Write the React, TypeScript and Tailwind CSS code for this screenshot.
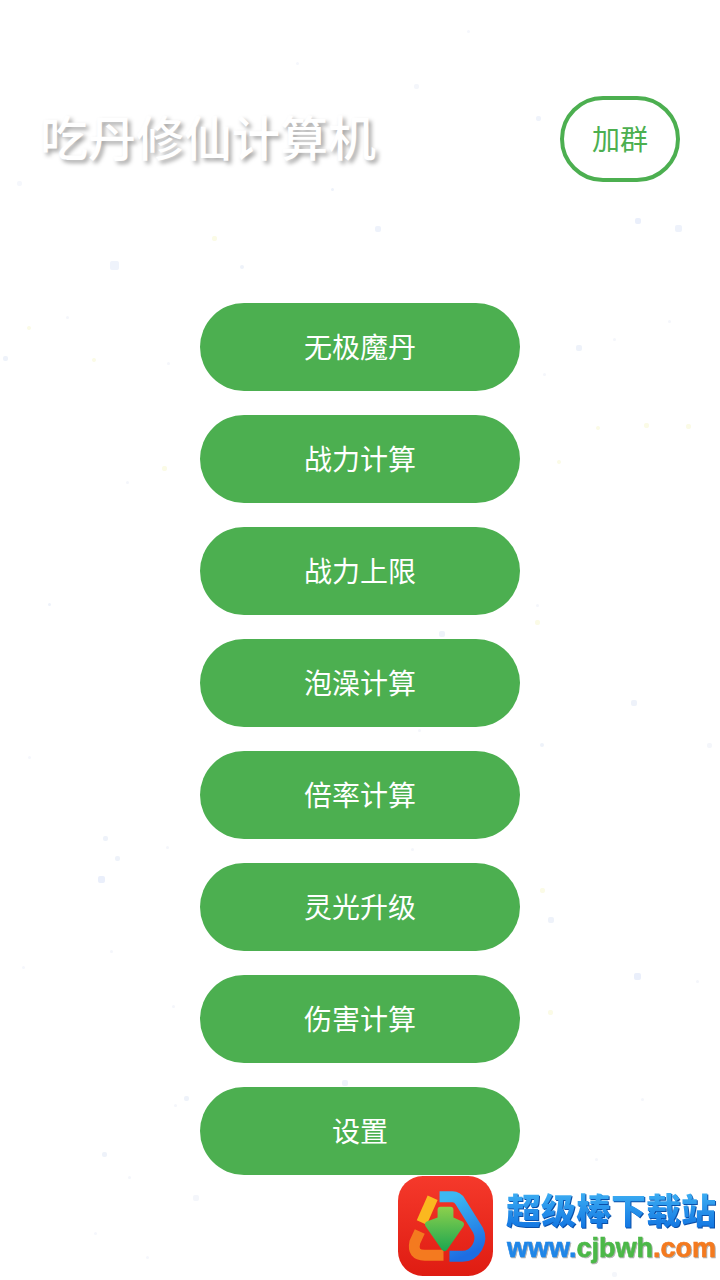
const menu = ["无极魔丹", "战力计算", "战力上限", "泡澡计算", "倍率计算", "灵光升级", "伤害计算", "设置"];

// faint confetti specks in the page background
const specks: [number, number, number, string][] = [
  [110, 261, 9, "#eff3fb"], [240, 265, 4, "#eef2fa"], [375, 226, 6, "#eef2fb"], [635, 218, 6, "#eaeffb"],
  [675, 225, 7, "#eef2fb"], [212, 236, 5, "#fbfbe6"], [536, 116, 5, "#eff3fb"], [17, 181, 5, "#f5f7fc"],
  [331, 188, 3, "#eef2fa"], [414, 84, 5, "#f4f6fb"], [296, 62, 3, "#f5f7fc"], [467, 30, 3, "#f5f7fc"],
  [3, 356, 5, "#eef2fa"], [66, 316, 3, "#f4f6fb"], [27, 326, 4, "#fbfbe6"], [92, 358, 4, "#fbfbe6"],
  [576, 345, 6, "#eef2fa"], [613, 338, 3, "#f4f6fb"], [668, 320, 3, "#f4f6fb"], [167, 362, 3, "#f4f6fb"],
  [543, 373, 3, "#f4f6fb"], [162, 466, 5, "#fbfbe6"], [126, 481, 3, "#f4f6fb"], [557, 460, 4, "#fbfbe6"],
  [596, 426, 4, "#fbfbe6"], [644, 423, 5, "#fbfbe6"], [686, 424, 5, "#fbfbe6"], [48, 603, 3, "#eef2fa"],
  [536, 604, 3, "#f4f6fb"], [535, 620, 5, "#fbfbe6"], [439, 631, 6, "#eef2fa"], [631, 700, 6, "#eef2fa"],
  [418, 729, 3, "#f4f6fb"], [540, 743, 4, "#eef2fa"], [707, 743, 5, "#f4f6fb"], [28, 756, 3, "#f5f7fc"],
  [103, 836, 5, "#eef2fa"], [115, 856, 5, "#eef2fa"], [98, 876, 7, "#eaeffb"], [166, 846, 3, "#f4f6fb"],
  [411, 848, 3, "#f4f6fb"], [540, 888, 5, "#fbfbe6"], [548, 917, 6, "#eef2fa"], [634, 973, 7, "#eaeffb"],
  [696, 980, 3, "#f4f6fb"], [22, 966, 3, "#f5f7fc"], [110, 950, 3, "#f4f6fb"], [172, 1005, 3, "#f4f6fb"],
  [548, 1010, 5, "#fbfbe6"], [342, 1080, 6, "#eef2fa"], [184, 1096, 5, "#eef2fa"], [174, 1104, 3, "#f4f6fb"],
  [102, 1152, 5, "#eef2fa"], [128, 1176, 3, "#f4f6fb"], [193, 1195, 6, "#f4f6fb"], [641, 1098, 3, "#f4f6fb"],
  [595, 1158, 3, "#f4f6fb"], [94, 1232, 3, "#f5f7fc"], [146, 1256, 3, "#f5f7fc"], [612, 1272, 5, "#f4f6fb"],
];

const LogoIcon = () => (
  <svg width="95" height="100" viewBox="0 0 96 101" className="block">
    <defs>
      <linearGradient id="bg" x1="0" y1="0" x2="0" y2="1">
        <stop offset="0" stopColor="#f5392b" />
        <stop offset="1" stopColor="#df1c12" />
      </linearGradient>
      <linearGradient id="blue" x1="0.3" y1="0" x2="0.6" y2="1">
        <stop offset="0" stopColor="#3db8f2" />
        <stop offset="1" stopColor="#1d6de2" />
      </linearGradient>
      <linearGradient id="arrow" x1="0" y1="0" x2="0" y2="1">
        <stop offset="0" stopColor="#8dd04c" />
        <stop offset="1" stopColor="#1ca650" />
      </linearGradient>
    </defs>
    <rect width="96" height="101" rx="25" fill="url(#bg)" />
    <path d="M35 22 L24 47" stroke="#fbb81f" strokeWidth="11" strokeLinecap="butt" fill="none" />
    <path d="M22 56 L17 67 Q14 80 27 80 L46 80" stroke="#f47a1f" strokeWidth="11" strokeLinecap="butt" strokeLinejoin="round" fill="none" />
    <path d="M42 21 L55 21 Q60 21 63 26 L81 55 Q85 63 80 72 Q75 81 65 81 L52 81" stroke="url(#blue)" strokeWidth="11" strokeLinecap="butt" strokeLinejoin="round" fill="none" />
    <path d="M40 34 Q40 31 43 31 L53 31 Q56 31 56 34 L56 42 L65 46 Q68 48 66 51 L50 74 Q47 78 44 74 L28 51 Q26 48 29 46 L40 42 Z" fill="url(#arrow)" />
  </svg>
);

export default function App() {
  return (
    <div className="relative h-[1280px] w-[720px] overflow-hidden bg-white font-['Noto_Sans_CJK_SC','Noto_Sans',sans-serif]">
      {specks.map(([x, y, s, c], i) => (
        <span
          key={i}
          className="absolute rounded-[2px]"
          style={{ left: x, top: y, width: s, height: s, backgroundColor: c }}
        />
      ))}

      <div className="relative flex flex-col items-center pt-24">
        <div className="flex w-full items-center justify-between px-10">
          <h1 className="pb-[8px] text-[48px] leading-[64px] font-medium text-white [text-shadow:3px_3px_4px_rgba(0,0,0,0.35)]">
            吃丹修仙计算机
          </h1>
          <button className="h-[86px] w-[120px] rounded-[43px] border-4 border-[#4caf50] bg-white pb-[2px] text-[28px] text-[#4caf50]">
            加群
          </button>
        </div>

        <div className="mt-[121px] flex flex-col gap-6">
          {menu.map((label) => (
            <button key={label} className="h-[88px] w-[320px] rounded-[44px] bg-[#4caf50] pb-[2px] text-[28px] text-white">
              {label}
            </button>
          ))}
        </div>
      </div>

      {/* site watermark */}
      <div className="absolute top-[1176px] left-[398px] flex items-start gap-[13px]">
        <LogoIcon />
        <div className="flex flex-col items-start pt-[10px]">
          <span className="bg-gradient-to-b from-[#45b8f5] to-[#0f6fe0] bg-clip-text text-[35px] leading-[46px] font-black whitespace-nowrap text-transparent [filter:drop-shadow(1px_1px_0_#0b4fa8)]">
            超级棒下载站
          </span>
          <span className="pl-[1px] font-['Liberation_Sans',sans-serif] text-[27px] leading-[32px] font-bold whitespace-nowrap [filter:drop-shadow(1px_1px_0_rgba(0,0,0,0.3))] [-webkit-text-stroke:0.6px_currentColor]">
            <span className="text-[#1f86e8]">www.</span>
            <span className="text-[#4cb848]">cjbwh</span>
            <span className="text-[#f47a1f]">.com</span>
          </span>
        </div>
      </div>
    </div>
  );
}
